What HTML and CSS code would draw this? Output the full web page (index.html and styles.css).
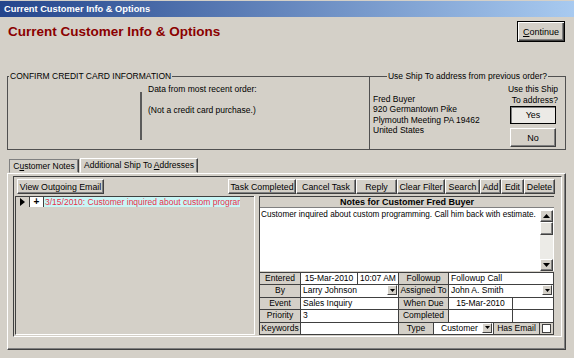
FILE: index.html
```html
<!DOCTYPE html>
<html lang="en">
<head>
  <meta charset="UTF-8">
  <meta name="viewport" content="width=device-width, initial-scale=1.0">
  <title>Current Customer Info &amp; Options</title>
  <link rel="stylesheet" href="styles.css">
</head>
<body>
  <div class="window">
    <div class="titlebar">Current Customer Info &amp; Options</div>

    <header class="page-head">
      <h1>Current Customer Info &amp; Options</h1>
      <button class="btn btn-default continue-btn"><u>C</u>ontinue</button>
    </header>

    <!-- Credit card / ship-to group boxes -->
    <div class="groups">
      <fieldset class="group group-card">
        <legend>CONFIRM CREDIT CARD INFORMATION</legend>
        <div class="card-blank"></div>
        <div class="card-sep"></div>
        <div class="card-info">
          <p>Data from most recent order:</p>
          <p class="card-note">(Not a credit card purchase.)</p>
        </div>
      </fieldset>
      <fieldset class="group group-ship">
        <legend>Use Ship To address from previous order?</legend>
        <div class="ship-address">
          Fred Buyer<br>
          920 Germantown Pike<br>
          Plymouth Meeting PA 19462<br>
          United States
        </div>
        <div class="ship-choice">
          <p>Use this Ship<br>To address?</p>
          <button class="btn btn-pressed ship-btn yes-btn">Yes</button>
          <button class="btn ship-btn no-btn">No</button>
        </div>
      </fieldset>
    </div>

    <div class="tabs">
      <div class="tab tab-notes">C<u>u</u>stomer Notes</div>
      <div class="tab tab-ship">Additional Ship To <u>A</u>ddresses</div>
    </div>

    <div class="tab-page">
      <div class="subform">
        <div class="toolbar">
          <button class="btn tb-btn email-btn">View Outgoing Email</button>
          <div class="tb-group">
            <button class="btn tb-btn b-task">Task Completed</button>
            <button class="btn tb-btn b-cancel">Cancel Task</button>
            <button class="btn tb-btn b-reply">Reply</button>
            <button class="btn tb-btn b-filter">Clear Filter</button>
            <button class="btn tb-btn b-search">Search</button>
            <button class="btn tb-btn b-add">Add</button>
            <button class="btn tb-btn b-edit">Edit</button>
            <button class="btn tb-btn b-delete">Delete</button>
          </div>
        </div>

        <div class="sub-body">
          <!-- Notes list -->
          <div class="note-list">
            <div class="list-row">
              <div class="row-selector">
                <svg width="5" height="8" viewBox="0 0 5 8"><path d="M0 0L5 4L0 8Z" fill="#000"/></svg>
              </div>
              <div class="row-expand">+</div>
              <div class="row-text">3/15/2010: Customer inquired about custom programming. Call him back with estimate.</div>
            </div>
          </div>

          <!-- Selected note detail -->
          <div class="note-detail">
            <div class="note-head">Notes for Customer Fred Buyer</div>
            <div class="note-text">
              <div class="note-body">Customer inquired about custom programming. Call him back with estimate.</div>
              <div class="scrollbar">
                <div class="sb-arrow"><svg width="7" height="4" viewBox="0 0 7 4"><path d="M3.5 0L7 4H0Z" fill="#000"/></svg></div>
                <div class="sb-thumb"></div>
                <div class="sb-track"></div>
                <div class="sb-arrow"><svg width="7" height="4" viewBox="0 0 7 4"><path d="M0 0H7L3.5 4Z" fill="#000"/></svg></div>
              </div>
            </div>

            <div class="note-grid">
              <div class="grid-row">
                <div class="cell lbl c-lbl1">Entered</div>
                <div class="cell val c-date centered">15-Mar-2010</div>
                <div class="cell val c-time centered">10:07 AM</div>
                <div class="cell lbl c-lbl2">Followup</div>
                <div class="cell val c-rest">Followup Call</div>
              </div>
              <div class="grid-row">
                <div class="cell lbl c-lbl1">By</div>
                <div class="cell val combo c-wide">
                  <span class="combo-text">Larry Johnson</span>
                  <span class="drop-btn"><svg width="5" height="3" viewBox="0 0 5 3"><path d="M0 0H5L2.5 3Z" fill="#000"/></svg></span>
                </div>
                <div class="cell lbl c-lbl2">Assigned To</div>
                <div class="cell val combo c-rest">
                  <span class="combo-text">John A. Smith</span>
                  <span class="drop-btn"><svg width="5" height="3" viewBox="0 0 5 3"><path d="M0 0H5L2.5 3Z" fill="#000"/></svg></span>
                </div>
              </div>
              <div class="grid-row">
                <div class="cell lbl c-lbl1">Event</div>
                <div class="cell val c-wide">Sales Inquiry</div>
                <div class="cell lbl c-lbl2">When Due</div>
                <div class="cell val c-due centered">15-Mar-2010</div>
                <div class="cell val c-rest"></div>
              </div>
              <div class="grid-row">
                <div class="cell lbl c-lbl1">Priority</div>
                <div class="cell val c-wide">3</div>
                <div class="cell lbl c-lbl2">Completed</div>
                <div class="cell val c-due"></div>
                <div class="cell val c-rest"></div>
              </div>
              <div class="grid-row">
                <div class="cell lbl c-lbl1">Keywords</div>
                <div class="cell val c-wide"></div>
                <div class="cell lbl c-type">Type</div>
                <div class="cell val combo c-cust">
                  <span class="combo-text cust-text">Customer</span>
                  <span class="drop-btn"><svg width="5" height="3" viewBox="0 0 5 3"><path d="M0 0H5L2.5 3Z" fill="#000"/></svg></span>
                </div>
                <div class="cell lbl c-email">Has Email</div>
                <div class="cell lbl c-check"><span class="checkbox"></span></div>
              </div>
            </div>
          </div>
        </div>
      </div>
    </div>
  </div>
</body>
</html>
```

FILE: styles.css
```css
* {
  box-sizing: border-box;
}

body {
  margin: 0;
  font-family: "Liberation Sans", Arial, sans-serif;
  font-size: 8.5px;
  color: #000;
  background-color: #d4d0c8;
}

p {
  margin: 0;
}

.window {
  width: 574px;
  height: 358px;
  background-color: #d4d0c8;
  overflow: hidden;
}

.titlebar {
  height: 16px;
  margin-top: 1px;
  padding-left: 4px;
  line-height: 16px;
  font-size: 9.3px;
  font-weight: bold;
  color: white;
  background: linear-gradient(to right, #24458c, #a8caf0);
}

.page-head {
  display: flex;
  justify-content: space-between;
  align-items: flex-start;
  height: 54px;
  padding: 0 9px 0 8px;
}

  .page-head h1 {
    margin: 6px 0 0;
    font-size: 13.5px;
    line-height: 18px;
    color: #8b0000;
  }

/* classic raised button */
.btn {
  margin: 0;
  padding: 0;
  font-family: inherit;
  font-size: 9px;
  color: #000;
  background-color: #d4d0c8;
  border: 1px solid;
  border-color: #fff #404040 #404040 #fff;
  box-shadow: inset -1px -1px #808080;
  white-space: nowrap;
  cursor: pointer;
}

.btn-default {
  border-color: #000;
  box-shadow: inset 1px 1px #fff, inset -1px -1px #404040, inset -2px -2px #808080;
}

.btn-pressed {
  border-color: #000;
  background-color: #eceae6;
  box-shadow: inset 1px 1px #808080;
}

.continue-btn {
  margin-top: 4px;
  width: 48px;
  height: 21px;
  font-size: 9px;
}

/* group boxes */
.groups {
  display: flex;
  margin-left: 7px;
}

.group {
  margin: 0;
  padding: 0;
  min-width: 0;
  height: 79px;
  border: 1px solid #505050;
  display: flex;
}

  .group legend {
    padding: 0 1px;
    line-height: 10px;
  }

.group-card {
  width: 363px;
}

  .group-card legend {
    margin-left: 1px;
  }

.card-blank {
  width: 132px;
}

.card-sep {
  width: 2px;
  height: 48px;
  margin-top: 11px;
  background-color: #5a5a5a;
}

.card-info {
  padding: 3px 0 0 6px;
  line-height: 10px;
}

.card-note {
  margin-top: 11px;
}

.group-ship {
  width: 197px;
  margin-left: -1px;
}

  .group-ship legend {
    margin-left: auto;
    margin-right: 17px;
  }

.ship-address {
  margin-top: 13px;
  padding-left: 3px;
  line-height: 10.3px;
  white-space: nowrap;
}

.ship-choice {
  width: 54px;
  margin-left: auto;
  margin-right: 5px;
  display: flex;
  flex-direction: column;
  align-items: center;
}

  .ship-choice p {
    margin-top: 3px;
    line-height: 10.5px;
    text-align: right;
    white-space: nowrap;
  }

.ship-btn {
  width: 46px;
}

.yes-btn {
  height: 18px;
  margin-top: 1px;
}

.no-btn {
  height: 19px;
  margin-top: 4px;
}

/* tabs */
.tabs {
  display: flex;
  align-items: flex-end;
  height: 15px;
  margin: 8px 0 0 9px;
}

.tab {
  height: 15px;
  line-height: 13px;
  font-size: 8.5px;
  text-align: center;
  white-space: nowrap;
  border: 1px solid;
  border-color: #fff #404040 transparent #fff;
  box-shadow: inset -1px 0 #808080;
}

.tab-notes {
  width: 70px;
  height: 14px;
  border-color: #808080 #404040 transparent #808080;
}

.tab-ship {
  width: 118px;
  margin-left: 1px;
}

.tab-page {
  height: 177px;
  margin: 0 8px 0 7px;
  padding: 2px 3px 0 5px;
  border: 1px solid;
  border-color: #fff #404040 #404040 #fff;
  box-shadow: inset -1px -1px #808080;
}

.subform {
  height: 161px;
  border: 1px solid;
  border-color: #404040 #fff #fff #404040;
}

.toolbar {
  display: flex;
  justify-content: space-between;
  padding: 2px 6px 0 3px;
}

.tb-group {
  display: flex;
}

.tb-btn {
  height: 15px;
  font-size: 8.8px;
}

.email-btn { width: 87px; }
.b-task { width: 68px; }
.b-cancel { width: 60px; }
.b-reply { width: 41px; }
.b-filter { width: 48px; }
.b-search { width: 35px; }
.b-add { width: 21px; }
.b-edit { width: 23px; }
.b-delete { width: 31px; }

.sub-body {
  display: flex;
  height: 139px;
  margin-top: 2px;
}

/* list of notes */
.note-list {
  width: 240px;
  margin-left: 1px;
  border-left: 1px solid #404040;
  border-right: 1px solid #fff;
  border-bottom: 1px solid #fff;
}

.list-row {
  display: flex;
  height: 11px;
  border-top: 1px solid #404040;
}

.row-selector {
  width: 14px;
  display: flex;
  align-items: center;
  justify-content: center;
  border-right: 1px solid #404040;
}

.row-expand {
  width: 14px;
  background-color: #fff;
  border-right: 1px solid #404040;
  text-align: center;
  line-height: 9px;
  font-size: 10px;
  font-weight: bold;
}

.row-text {
  width: 196px;
  padding-left: 1px;
  line-height: 10px;
  white-space: nowrap;
  overflow: hidden;
  color: #e8304a;
  background-color: #c8f6f6;
}

/* note detail */
.note-detail {
  width: 295px;
  margin-left: 4px;
  display: flex;
  flex-direction: column;
  border-left: 1px solid #404040;
}

.note-head {
  height: 11px;
  line-height: 10px;
  text-align: center;
  font-size: 9px;
  font-weight: bold;
  border-top: 1px solid #404040;
}

.note-text {
  display: flex;
  height: 64px;
  background-color: #fff;
  border-top: 1px solid #808080;
}

.note-body {
  flex: 1;
  min-width: 0;
  padding: 2px 0 0 1px;
  line-height: 10px;
  font-size: 8.2px;
  white-space: nowrap;
  overflow: hidden;
}

.scrollbar {
  width: 13px;
  margin: 2px 1px 0 0;
  display: flex;
  flex-direction: column;
  background-color: #ecebe7;
}

.sb-arrow,
.sb-thumb {
  height: 12px;
  display: flex;
  align-items: center;
  justify-content: center;
  background-color: #d4d0c8;
  border: 1px solid;
  border-color: #fff #404040 #404040 #fff;
  box-shadow: inset -1px -1px #808080;
}

.sb-thumb {
  height: 13px;
  background-color: #e4e2dc;
}

.sb-track {
  flex: 1;
}

.note-grid {
  margin-top: 1px;
  border-top: 1px solid #404040;
}

.grid-row {
  display: flex;
  height: 12.4px;
}

.cell {
  height: 100%;
  padding: 0 2px;
  line-height: 11px;
  white-space: nowrap;
  overflow: hidden;
  border-right: 1px solid #404040;
  border-bottom: 1px solid #404040;
}

.lbl {
  padding: 0;
  text-align: center;
  background-color: #d4d0c8;
}

.val {
  background-color: #fff;
}

.centered {
  text-align: center;
}

.c-lbl1 { width: 41px; }
.c-date { width: 57px; }
.c-time { width: 41px; }
.c-lbl2 { width: 50px; }
.c-wide { width: 98px; }
.c-due { width: 64px; }
.c-type { width: 35px; }
.c-cust { width: 60px; }
.c-email { width: 46px; }
.c-rest,
.c-check { flex: 1; }

.combo {
  display: flex;
  padding-right: 1px;
}

.combo-text {
  flex: 1;
  overflow: hidden;
}

.cust-text {
  padding-left: 5px;
}

.drop-btn {
  width: 10px;
  height: 10px;
  display: flex;
  align-items: center;
  justify-content: center;
  background-color: #d4d0c8;
  border: 1px solid;
  border-color: #fff #404040 #404040 #fff;
}

.c-check {
  display: flex;
  align-items: center;
  justify-content: center;
}

.checkbox {
  width: 9px;
  height: 9px;
  background-color: #fff;
  border: 1px solid #404040;
}
```
